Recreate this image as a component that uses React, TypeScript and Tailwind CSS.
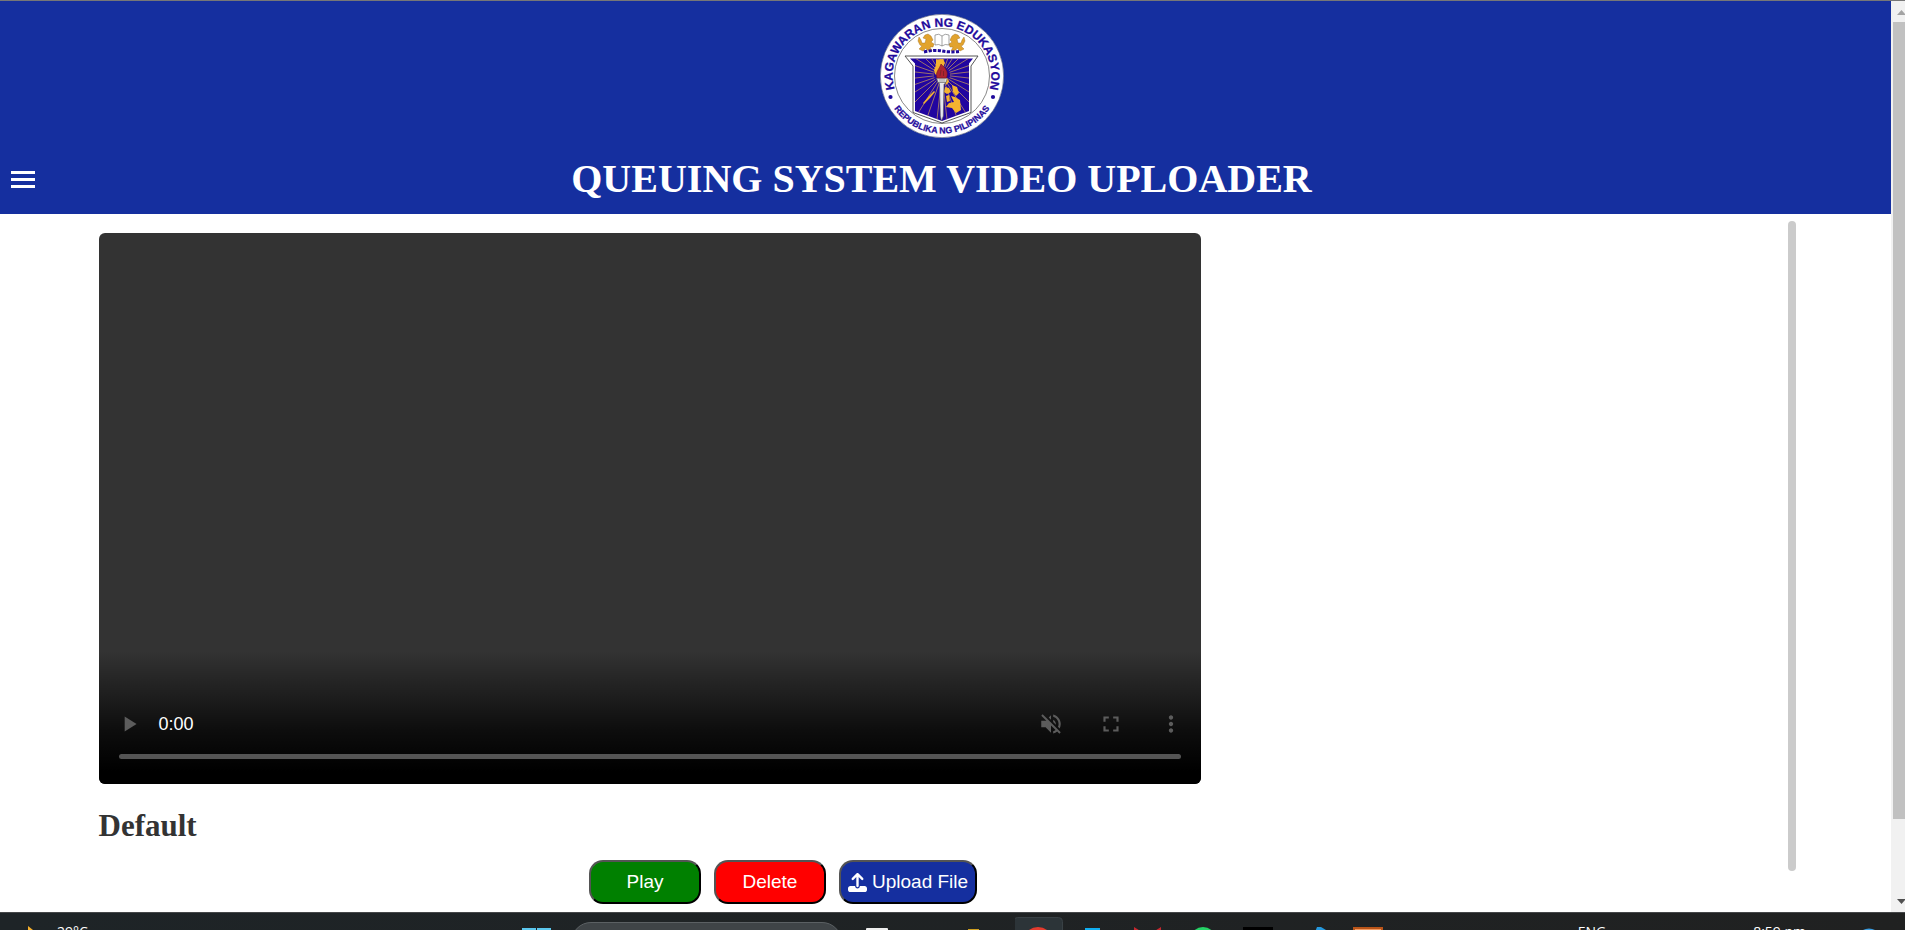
import React from "react";

const RAYS = Array.from({ length: 28 }, (_, i) => ((i + 0.5) * 2 * Math.PI) / 28);

function Seal() {
  return (
    <svg viewBox="0 0 124 124" className="size-[124px]" role="img" aria-label="Kagawaran ng Edukasyon seal">
      <defs>
        <path id="arc-top" d="M 14.67 75.64 A 49.3 49.3 0 1 1 109.33 75.64" />
        <path id="arc-bottom" d="M 8.1 83 A 58 58 0 0 0 115.9 83" />
        <clipPath id="shield">
          <path d="M30 44.5 H93 L89 49.5 V97 L62 107 L35 97 V49.5 Z" />
        </clipPath>
      </defs>
      <circle cx="62" cy="62" r="61.7" fill="#fff" stroke="#5a5f78" strokeWidth="0.6" />
      <circle cx="62" cy="62" r="47.5" fill="#fff" stroke="#555" strokeWidth="0.7" />
      <g
        fill="#1f0a9c"
        stroke="#1f0a9c"
        strokeWidth="0.25"
        fontFamily="Liberation Sans, Arial, sans-serif"
        fontWeight="bold"
        textAnchor="middle"
      >
        <text fontSize="12">
          <textPath href="#arc-top" startOffset="50%">KAGAWARAN NG EDUKASYON</textPath>
        </text>
        <text fontSize="8.8">
          <textPath href="#arc-bottom" startOffset="50%">REPUBLIKA NG PILIPINAS</textPath>
        </text>
      </g>
      <circle cx="10.5" cy="83" r="2.1" fill="#1f0a9c" />
      <circle cx="113" cy="83" r="2.1" fill="#1f0a9c" />
      <path d="M25 42 H98 L91 52 V98.5 L62 109 L33 98.5 V52 Z" fill="#fff" stroke="#444" strokeWidth="0.9" />
      <path d="M30 44.5 H93 L89 49.5 V97 L62 107 L35 97 V49.5 Z" fill="#2105a0" />
      <g clipPath="url(#shield)" stroke="#b98d62" strokeWidth="0.8">
        {RAYS.map((a) => (
          <line
            key={a}
            x1={62 + 8 * Math.cos(a)}
            y1={61 + 8 * Math.sin(a)}
            x2={62 + 55 * Math.cos(a)}
            y2={61 + 55 * Math.sin(a)}
          />
        ))}
      </g>
      <g fill="#f5b32f">
        <path d="M56 45.5 L63 45 L65 49 L62 55 L59 63 L55 60 L54 56 L56 51 Z" />
        <path d="M65 65 L68 64 L69 68 L66 71 Z" />
        <path d="M65 73 L69 74 L71 78 L67 80 L64 78 Z" />
        <path d="M72 71 L77 73 L79 79 L76 82 L73 78 Z" />
        <path d="M66 82 L69 81 L70 87 L67 88 Z" />
        <path d="M71 82 L75 83 L80 86 L81 96 L76 99 L72 94 L66 93 L69 89 L74 88 Z" />
        <path d="M43 89 L50 81 L54 77 L55 78 L50 84 L44 90 Z" />
      </g>
      <path d="M58 66 H66 L65 70 H64 L63.3 102 L61.5 107 L60.3 102 L59.5 70 Z" fill="#e7e7ee" stroke="#555" strokeWidth="0.6" />
      <path d="M56.5 64 H67.5 L66 68.5 H58 Z" fill="#ddd" stroke="#555" strokeWidth="0.6" />
      <path d="M60 64.500 V68 M62 64.500 V68 M64 64.500 V68" stroke="#777" strokeWidth="0.5" />
      <path d="M57 64 C55 58 59 56 61 50 C65 54 69 57 66.5 64 Z" fill="#ad2430" stroke="#6d1220" strokeWidth="0.6" />
      <path d="M60 62 l1 -6 M63.5 62 l0 -5" stroke="#742026" strokeWidth="0.8" />
      <g fill="#e2a32d" stroke="#9c6b19" strokeWidth="0.4">
        <path d="M38 27 L39 23 L41 26 L42 29 L45 29 L46 25 L43 24 L45 21 L48 20 L51 22 L53 26 L51 28 L54 30 L53 33 L50 33 L52 37 L47 36 L46 34 L43 37 L39 35 L42 32 L40 31 Z" />
        <path d="M85 27 L84 23 L82 26 L81 29 L78 29 L77 25 L80 24 L78 21 L75 20 L72 22 L70 26 L72 28 L69 30 L70 33 L73 33 L71 37 L76 36 L77 34 L80 37 L84 35 L81 32 L83 31 Z" />
      </g>
      <path d="M55 21 Q59 19 62 22 Q65 19 69 21 V31 Q65 29.5 62 32 Q59 29.5 55 31 Z M62 22 V32" fill="#fff" stroke="#666" strokeWidth="0.6" />
      <path d="M44 38 Q54 35.500 62 37 Q70 38.500 79 37.500" fill="none" stroke="#1f0a9c" strokeWidth="3" strokeDasharray="3.2 1.4" />
    </svg>
  );
}

const ICONS = {
  play: "M8 5v14l11-7z",
  muted:
    "M16.5 12c0-1.77-1.02-3.29-2.5-4.03v2.21l2.45 2.45c.03-.2.05-.41.05-.63zm2.5 0c0 .94-.2 1.82-.54 2.64l1.51 1.51C20.63 14.91 21 13.5 21 12c0-4.28-2.99-7.86-7-8.77v2.06c2.89.86 5 3.54 5 6.71zM4.27 3L3 4.27 7.73 9H3v6h4l5 5v-6.73l4.25 4.25c-.67.52-1.42.93-2.25 1.18v2.06c1.38-.31 2.63-.95 3.69-1.81L19.73 21 21 19.73l-9-9L4.27 3zM12 4L9.91 6.09 12 8.18V4z",
  fullscreen: "M7 14H5v5h5v-2H7v-3zm-2-4h2V7h3V5H5v5zm12 7h-3v2h5v-5h-2v3zM14 5v2h3v3h2V5h-5z",
  more: "M12 8c1.1 0 2-.9 2-2s-.9-2-2-2-2 .9-2 2 .9 2 2 2zm0 2c-1.1 0-2 .9-2 2s.9 2 2 2 2-.9 2-2-.9-2-2-2zm0 6c-1.1 0-2 .9-2 2s.9 2 2 2 2-.9 2-2-.9-2-2-2z",
};

function ControlButton({ icon, label }: { icon: keyof typeof ICONS; label: string }) {
  return (
    <button type="button" aria-label={label} className="flex size-[26px] items-center justify-center text-[#5c5c5c]">
      <svg viewBox="0 0 24 24" className="size-[26px]" fill="currentColor">
        <path d={ICONS[icon]} />
      </svg>
    </button>
  );
}

function Player() {
  return (
    <div className="flex aspect-[2/1] w-full max-w-[1102px] flex-col justify-end overflow-hidden rounded-md bg-[#333]">
      <div className="bg-linear-to-b from-transparent via-black/75 via-60% to-black to-90% px-[17px] pt-[60px] pb-[25px]">
        <div className="flex items-center justify-between pb-[17px]">
          <div className="flex items-center gap-[17px]">
            <ControlButton icon="play" label="Play video" />
            <span className="font-['Liberation_Sans',Arial,sans-serif] text-lg leading-6 text-white">0:00</span>
          </div>
          <div className="flex items-center gap-[34px]">
            <ControlButton icon="muted" label="Unmute" />
            <ControlButton icon="fullscreen" label="Full screen" />
            <ControlButton icon="more" label="More options" />
          </div>
        </div>
        <div className="px-[3px]">
          <input
            type="range"
            aria-label="Video position"
            defaultValue={0}
            className="block h-[5px] w-full appearance-none rounded-full bg-[#545454] [&::-webkit-slider-thumb]:appearance-none"
          />
        </div>
      </div>
    </div>
  );
}

const buttonBase =
  "flex h-11 items-center justify-center rounded-[14px] border-2 border-black [border-style:outset] font-['Liberation_Sans',Arial,sans-serif] text-[19px] leading-6 text-white";

function AppIcon({ children, active = false }: { children?: React.ReactNode; active?: boolean }) {
  return (
    <svg viewBox="0 0 55 17" className="h-[17px] w-[55px]">
      {active && <rect x="-1.5" y="4.5" width="49" height="30" rx="4" fill="#2c3438" stroke="#394145" />}
      {children}
    </svg>
  );
}

function Taskbar() {
  return (
    <footer className="flex h-[18px] shrink-0 items-start justify-between overflow-hidden border-t border-[#454749] bg-[#1e2427] bg-linear-to-r from-[#1e2427] to-[#202121] font-['Open_Sans','Noto_Sans',sans-serif] text-sm leading-5 text-white">
      <div className="flex w-[522px] gap-[23px] pl-7">
        <svg viewBox="0 0 6 17" className="h-[17px] w-[6px]">
          <path d="M0 13 L5 17 H0 Z" fill="#f6b02c" />
        </svg>
        <span className="pt-[9px]">29°C</span>
      </div>
      <div className="flex">
        <svg viewBox="0 0 30 17" className="h-[17px] w-[30px]">
          <path d="M0 15 H14 V17 H0 Z M15 15 H29 V17 H15 Z" fill="#5cc8ef" />
        </svg>
        <div className="mt-[9px] mr-2 ml-[19px] h-10 w-[271px] rounded-[20px] border border-[#5b6063] bg-[#3f4447]" />
        <AppIcon><rect x="16" y="15" width="22" height="6" rx="1" fill="#eee" /></AppIcon>
        <AppIcon />
        <AppIcon><rect x="8" y="16" width="11" height="4" fill="#d0a021" /></AppIcon>
        <AppIcon active><circle cx="23" cy="29" r="15" fill="#e33b2e" /></AppIcon>
        <AppIcon><rect x="15" y="15" width="15" height="5" fill="#10aef0" /></AppIcon>
        <AppIcon><path d="M9 14 L17 19 H9 Z M36 14 L28 19 H36 Z" fill="#c5282f" /></AppIcon>
        <AppIcon><circle cx="23" cy="27" r="13" fill="#25d366" /></AppIcon>
        <AppIcon><rect x="8" y="14" width="30" height="6" fill="#000" /></AppIcon>
        <AppIcon><path d="M27 14 L31 14 L36 17 V19 H25 Z" fill="#2598dd" /></AppIcon>
        <AppIcon><rect x="9" y="15" width="28" height="9" fill="#f29a62" stroke="#b95418" strokeWidth="2" /></AppIcon>
      </div>
      <div className="flex flex-1 items-start justify-end pr-[27px]">
        <span className="mr-[147px] pt-[9px]">ENG</span>
        <span className="mr-[54px] pt-[9px]">8:59 pm</span>
        <svg viewBox="0 0 18 17" className="h-[17px] w-[18px]">
          <circle cx="9" cy="28" r="12.5" fill="#3b9de0" />
        </svg>
      </div>
    </footer>
  );
}

export default function App() {
  return (
    <div className="flex h-screen flex-col overflow-hidden border-t border-[#777] bg-white font-['Liberation_Serif','Times_New_Roman',serif]">
      <div className="flex min-h-0 flex-1">
        <div className="flex min-w-0 flex-1 flex-col">
          <header className="flex flex-col gap-[17px] bg-[#152f9f] pt-[13px] pr-[19px] pb-[11px] pl-[11px] text-white">
            <div className="flex justify-center">
              <Seal />
            </div>
            <div className="flex items-center justify-between">
              <button type="button" aria-label="Menu" className="flex w-6 flex-col gap-1">
                <span className="h-[3px] w-full bg-white" />
                <span className="h-[3px] w-full bg-white" />
                <span className="h-[3px] w-full bg-white" />
              </button>
              <h1 className="text-[40px] leading-[48px] font-bold">QUEUING SYSTEM VIDEO UPLOADER</h1>
              <span className="w-6" />
            </div>
          </header>
          <main className="mx-auto mt-[7px] flex w-[90%] items-start justify-between">
            <section className="flex w-full max-w-[1373px] flex-col pt-3 pl-1">
              <Player />
              <h2 className="pt-6 text-[31px] leading-9 font-bold text-[#333]">Default</h2>
              <div className="flex justify-center gap-[13px] pt-4">
                <button type="button" className={`${buttonBase} w-28 bg-[#008000]`}>Play</button>
                <button type="button" className={`${buttonBase} w-28 bg-[#ff0000]`}>Delete</button>
                <button type="button" className={`${buttonBase} gap-[5px] bg-[#152f9f] px-[7px]`}>
                  <svg viewBox="0 0 512 512" className="size-[19px]" fill="currentColor">
                    <path d="M288 109.3V352c0 17.7-14.3 32-32 32s-32-14.3-32-32V109.3l-73.4 73.4c-12.5 12.5-32.8 12.5-45.3 0s-12.5-32.8 0-45.3l128-128c12.5-12.5 32.8-12.5 45.3 0l128 128c12.5 12.5 12.5 32.8 0 45.3s-32.8 12.5-45.3 0L288 109.3zM64 352H192c0 35.3 28.7 64 64 64s64-28.7 64-64H448c35.3 0 64 28.7 64 64v32c0 35.3-28.7 64-64 64H64c-35.3 0-64-28.7-64-64V416c0-35.3 28.7-64 64-64z" />
                  </svg>
                  Upload File
                </button>
              </div>
            </section>
            <div className="h-[650px] w-2 shrink-0 rounded-full bg-[#cbcbcb]" />
          </main>
        </div>
        <div className="flex w-[14px] shrink-0 flex-col justify-between overflow-hidden bg-[#f1f1f1]">
          <svg viewBox="0 0 14 21" className="h-[21px] w-[14px]">
            <path d="M6 14 L10.5 9 L15 14 Z" fill="#a3a3a3" />
          </svg>
          <div className="ml-0.5 flex-1 bg-[#c1c1c1]" />
          <svg viewBox="0 0 14 93" className="h-[93px] w-[14px]">
            <path d="M6 80 H15 L10.5 85 Z" fill="#505050" />
          </svg>
        </div>
      </div>
      <Taskbar />
    </div>
  );
}
